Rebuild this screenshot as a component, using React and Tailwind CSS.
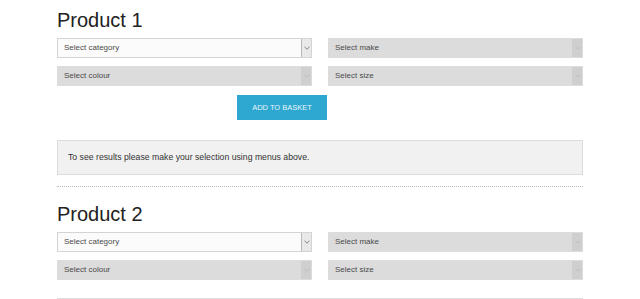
import React from 'react';

const Chevron = ({ light }) => (
  <svg width="6" height="4" viewBox="0 0 6 4" fill="none">
    <path d="M0.5 0.8L3 3.2L5.5 0.8" stroke={light ? '#bdbdbd' : '#777'} strokeWidth="0.9" />
  </svg>
);

const SelectBox = ({ label, active }) => (
  <div
    className={
      'h-[20px] flex items-stretch border ' +
      (active ? 'bg-[#fbfbfb] border-[#d4d4d4]' : 'bg-[#dcdcdc] border-[#dcdcdc]')
    }
  >
    <div className="flex-1 flex items-center pl-[6px] text-[8px] text-[#4a4a4a]">{label}</div>
    <div
      className={
        'w-[10px] flex items-center justify-center border-l ' +
        (active ? 'bg-[#e9e9e9] border-[#b8b8b8]' : 'bg-[#cfcfcf] border-[#cfcfcf]')
      }
    >
      <Chevron light={!active} />
    </div>
  </div>
);

const Product = ({ title, showButton }) => (
  <div>
    <h2 className="h-[24px] text-[20px] leading-[24px] text-[#222]">{title}</h2>
    <div className="mt-[6px] grid grid-cols-2 gap-x-4 gap-y-[8px]">
      <SelectBox label="Select category" active />
      <SelectBox label="Select make" />
      <SelectBox label="Select colour" />
      <SelectBox label="Select size" />
    </div>
    {showButton && (
      <button className="mt-[9px] ml-[180px] w-[90px] h-[25px] bg-[#2fa8d1] text-[#e8f5fb] text-[7.5px] uppercase">
        Add to basket
      </button>
    )}
  </div>
);

export default function App() {
  return (
    <div className="min-h-screen bg-white" style={{ fontFamily: '"Liberation Sans", Arial, sans-serif' }}>
      <div className="w-[526px] mx-auto pt-[8px]">
        <Product title="Product 1" showButton />
        <div className="mt-[20px] h-[35px] bg-[#f1f1f1] border border-[#dcdcdc] flex items-center pl-[10px] text-[8.7px] text-[#333]">
          To see results please make your selection using menus above.
        </div>
        <div className="mt-[11px] border-t border-dotted border-[#bdbdbd]" />
        <div className="mt-[15px]">
          <Product title="Product 2" />
        </div>
        <div className="mt-[18px] h-[35px] bg-[#f1f1f1] border border-[#dcdcdc]" />
      </div>
    </div>
  );
}
